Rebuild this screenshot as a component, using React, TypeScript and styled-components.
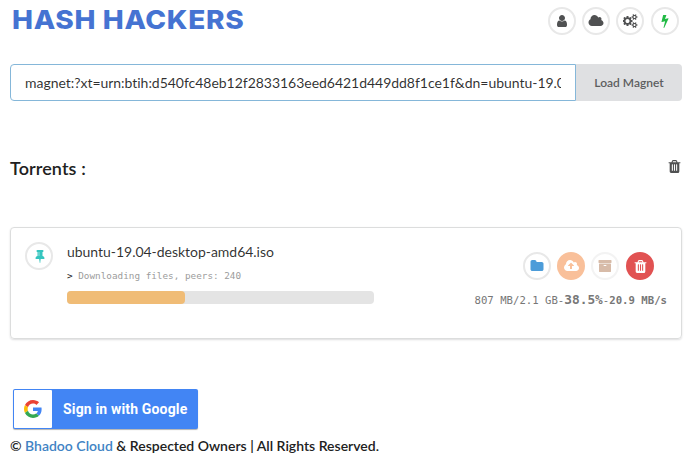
import React from "react";
import styled, { createGlobalStyle } from "styled-components";

const GlobalStyle = createGlobalStyle`
  * { box-sizing: border-box; }
  body {
    margin: 0;
    background: #fff;
    color: rgba(0, 0, 0, 0.87);
    font-family: Lato, "Liberation Sans", sans-serif;
    font-size: 14px;
    font-variant-ligatures: none;
    overflow: hidden;
  }
`;

const glyphs = {
  user: { w: 1792, d: "M1536 1399q0 109-62.5 187t-150.5 78h-854q-88 0-150.5-78t-62.5-187q0-85 8.5-160.5t31.5-152 58.5-131 94-89 134.5-34.5q131 128 313 128t313-128q76 0 134.5 34.5t94 89 58.5 131 31.5 152 8.5 160.5zm-256-887q0 159-112.5 271.5t-271.5 112.5-271.5-112.5-112.5-271.5 112.5-271.5 271.5-112.5 271.5 112.5 112.5 271.5z" },
  cloud: { w: 2048, d: "M1984 1152q0 159-112.5 271.5t-271.5 112.5h-1088q-185 0-316.5-131.5t-131.5-316.5q0-132 71-241.5t187-163.5q-2-28-2-43 0-212 150-362t362-150q158 0 286.5 88t187.5 230q70-62 166-62 106 0 181 75t75 181q0 75-41 138 129 30 213 134.5t84 239.5z" },
  cogs: { w: 1920, d: "M832 896q0-106-75-181t-181-75-181 75-75 181 75 181 181 75 181-75 75-181zm768 512q0-52-38-90t-90-38-90 38-38 90q0 53 37.5 90.5t90.5 37.5 90.5-37.5 37.5-90.5zm0-1024q0-52-38-90t-90-38-90 38-38 90q0 53 37.5 90.5t90.5 37.5 90.5-37.5 37.5-90.5zm-384 421v185q0 10-7 19.5t-16 10.5l-155 24q-11 35-32 76 34 48 90 115 7 11 7 20 0 12-7 19-23 30-82.5 89.5t-78.5 59.5q-11 0-21-7l-115-90q-37 19-77 31-11 108-23 155-7 24-30 24h-186q-11 0-20-7.5t-10-17.5l-23-153q-34-10-75-31l-118 89q-7 7-20 7-11 0-21-8-144-133-144-160 0-9 7-19 10-14 41-53t47-61q-23-44-35-82l-152-24q-10-1-17-9.5t-7-19.5v-185q0-10 7-19.5t16-10.5l155-24q11-35 32-76-34-48-90-115-7-11-7-20 0-12 7-20 22-30 82-89t79-59q11 0 21 7l115 90q34-18 77-32 11-108 23-154 7-24 30-24h186q11 0 20 7.5t10 17.5l23 153q34 10 75 31l118-89q8-7 20-7 11 0 21 8 144 133 144 160 0 8-7 19-12 16-42 54t-45 60q23 48 34 82l152 23q10 2 17 10.5t7 19.5zm640 533v140q0 16-149 31-12 27-30 52 51 113 51 138 0 4-4 7-122 71-124 71-8 0-46-47t-52-68q-20 2-30 2t-30-2q-14 21-52 68t-46 47q-2 0-124-71-4-3-4-7 0-25 51-138-18-25-30-52-149-15-149-31v-140q0-16 149-31 13-29 30-52-51-113-51-138 0-4 4-7 4-2 35-20t59-34 30-16q8 0 46 46.5t52 67.5q20-2 30-2t30 2q51-71 92-112l6-2q4 0 124 70 4 3 4 7 0 25-51 138 17 23 30 52 149 15 149 31zm0-1024v140q0 16-149 31-12 27-30 52 51 113 51 138 0 4-4 7-122 71-124 71-8 0-46-47t-52-68q-20 2-30 2t-30-2q-14 21-52 68t-46 47q-2 0-124-71-4-3-4-7 0-25 51-138-18-25-30-52-149-15-149-31v-140q0-16 149-31 13-29 30-52-51-113-51-138 0-4 4-7 4-2 35-20t59-34 30-16q8 0 46 46.5t52 67.5q20-2 30-2t30 2q51-71 92-112l6-2q4 0 124 70 4 3 4 7 0 25-51 138 17 23 30 52 149 15 149 31z" },
  bolt: { w: 1792, d: "M1333 566q18 20 7 44l-540 1157q-13 25-42 25-4 0-14-2-17-5-25.5-19t-4.5-30l197-808-406 101q-4 1-12 1-18 0-31-11-18-15-13-39l201-825q4-14 16-23t28-9h328q19 0 32 12.5t13 29.5q0 8-5 18l-171 463 396-98q8-2 12-2 19 0 34 15z" },
  trash: { w: 1792, d: "M704 1376v-704q0-14-9-23t-23-9h-64q-14 0-23 9t-9 23v704q0 14 9 23t23 9h64q14 0 23-9t9-23zm256 0v-704q0-14-9-23t-23-9h-64q-14 0-23 9t-9 23v704q0 14 9 23t23 9h64q14 0 23-9t9-23zm256 0v-704q0-14-9-23t-23-9h-64q-14 0-23 9t-9 23v704q0 14 9 23t23 9h64q14 0 23-9t9-23zm-544-992h448l-48-117q-7-9-17-11h-317q-10 2-17 11zm928 32v64q0 14-9 23t-23 9h-96v948q0 83-47 143.5t-113 60.5h-832q-66 0-113-58.5t-47-141.5v-952h-96q-14 0-23-9t-9-23v-64q0-14 9-23t23-9h309l70-167q15-37 54-63t79-26h320q40 0 79 26t54 63l70 167h309q14 0 23 9t9 23z" },
  pin: { w: 1664, d: "M800 864v-448q0-14-9-23t-23-9-23 9-9 23v448q0 14 9 23t23 9 23-9 9-23zm672 352q0 26-19 45t-45 19h-429l-51 483q-2 12-10.5 20.5t-20.5 8.5h-1q-27 0-32-27l-76-485h-404q-26 0-45-19t-19-45q0-123 78.5-221.5t177.5-98.5v-512q-52 0-90-38t-38-90 38-90 90-38h640q52 0 90 38t38 90-38 90-90 38v512q99 0 177.5 98.5t78.5 221.5z" },
  folder: { w: 1792, d: "M1728 608v704q0 92-66 158t-158 66h-1216q-92 0-158-66t-66-158v-960q0-92 66-158t158-66h320q92 0 158 66t66 158v32h672q92 0 158 66t66 158z" },
  upload: { w: 1920, d: "M1280 864q0-14-9-23l-352-352q-9-9-23-9t-23 9l-351 351q-10 12-10 24 0 14 9 23t23 9h224v352q0 13 9.5 22.5t22.5 9.5h192q13 0 22.5-9.5t9.5-22.5v-352h224q13 0 22.5-9.5t9.5-22.5zm640 288q0 159-112.5 271.5t-271.5 112.5h-1088q-185 0-316.5-131.5t-131.5-316.5q0-130 70-240t188-165q-2-30-2-43 0-212 150-362t362-150q156 0 285.5 87t188.5 231q71-62 166-62 106 0 181 75t75 181q0 76-41 138 130 31 213.5 135.5t83.5 238.5z" },
  archive: { w: 1792, d: "M1088 832q0-26-19-45t-45-19h-256q-26 0-45 19t-19 45 19 45 45 19h256q26 0 45-19t19-45zm576-192v960q0 26-19 45t-45 19h-1408q-26 0-45-19t-19-45v-960q0-26 19-45t45-19h1408q26 0 45 19t19 45zm64-448v256q0 26-19 45t-45 19h-1536q-26 0-45-19t-19-45v-256q0-26 19-45t45-19h1536q26 0 45 19t19 45z" },
};

const Icon = ({ name, size = 14 }: { name: keyof typeof glyphs; size?: number }) => (
  <svg
    width={(glyphs[name].w / 1792) * size}
    height={size}
    viewBox={`0 0 ${glyphs[name].w} 1792`}
    fill="currentColor"
    aria-hidden="true"
  >
    <path d={glyphs[name].d} />
  </svg>
);

const Page = styled.div`
  width: 693px;
  height: 468px;
  padding: 0 11px 0 10px;
`;

const Header = styled.header`
  display: flex;
  justify-content: space-between;
  height: 64px;
  padding: 7px 3px 0 1px;
`;

const Logo = styled.h1`
  margin: 1px 0 0 1px;
  height: 24px;
  font: 800 26px/24px Inter, sans-serif;
  letter-spacing: 0.6px;
  color: #4573d2;
  white-space: nowrap;
  transform: scaleX(1.078);
  transform-origin: left center;
`;

const HeaderActions = styled.nav`
  display: flex;
  gap: 6px;

  & > :last-child { margin-left: 1px; }
`;

const CircleButton = styled.button<{ $color?: string; $fill?: string; $faded?: boolean }>`
  display: flex;
  flex: none;
  align-items: center;
  justify-content: center;
  width: 28px;
  height: 28px;
  padding: 0;
  border: ${(p) => (p.$fill ? "0" : "2px solid #e8e8e8")};
  border-radius: 50%;
  background: ${(p) => p.$fill ?? "#fff"};
  color: ${(p) => p.$color ?? "#505152"};
  opacity: ${(p) => (p.$faded ? 0.5 : 1)};
`;

const MagnetForm = styled.form`
  display: flex;
  width: 672px;
  height: 37px;
`;

const MagnetInput = styled.input`
  width: 566px;
  height: 37px;
  padding: 0 14px;
  border: 1px solid #85b7d9;
  border-radius: 4px 0 0 4px;
  outline: 0;
  font: 400 14px Lato, sans-serif;
  font-variant-ligatures: none;
  letter-spacing: -0.03px;
  color: rgba(0, 0, 0, 0.82);
`;

const LoadButton = styled.button`
  flex: 1;
  padding: 0;
  border: 0;
  border-radius: 0 4px 4px 0;
  background: #dfe0e2;
  color: #5d5e5f;
  font: 600 12px Lato, sans-serif;
`;

const SectionHead = styled.div`
  display: flex;
  align-items: flex-start;
  justify-content: space-between;
  height: 24px;
  margin-top: 55px;
  color: #505152;

  & > svg { margin-top: 3px; }
`;

const SectionTitle = styled.h2`
  margin: 0;
  font-size: 18px;
  line-height: 24px;
  font-weight: 600;
  letter-spacing: 0.1px;
  color: #212121;
`;

const Card = styled.article`
  display: flex;
  width: 672px;
  height: 112px;
  margin-top: 47px;
  padding: 14px;
  border: 1px solid #dcdddd;
  border-radius: 4px;
  box-shadow: 0 1px 2px rgba(34, 36, 38, 0.15);
`;

const Details = styled.div`
  width: 307px;
  margin-left: 14px;
`;

const FileName = styled.div`
  height: 20px;
  line-height: 20px;
  font-size: 14px;
  letter-spacing: -0.03px;
  color: rgba(0, 0, 0, 0.82);
`;

const Status = styled.div`
  height: 14px;
  margin-top: 7px;
  font: 400 9.33px/14px "DejaVu Sans Mono", monospace;
  color: #9c9c9c;
  white-space: pre;
`;

const Prompt = styled.span`
  color: #222;
`;

const Track = styled.div`
  height: 13px;
  margin-top: 8px;
  border-radius: 4px;
  background: #e4e4e4;
`;

const Progress = styled.div`
  width: 38.5%;
  height: 100%;
  border-radius: 4px;
  background: #f0bc76;
`;

const Side = styled.div`
  display: flex;
  flex: 1;
  flex-direction: column;
  align-items: flex-end;
  padding-top: 10px;
`;

const CardActions = styled.div`
  display: flex;
  gap: 6px;
  padding-right: 13px;

  & > :last-child { margin-left: 1px; }
`;

const Stats = styled.div`
  display: flex;
  align-items: baseline;
  margin-top: 10px;
  font: 400 10.67px/20px "DejaVu Sans Mono", monospace;
  color: #777;
  white-space: pre;
`;

const Percent = styled.strong`
  font-size: 12.8px;
`;

const GoogleButton = styled.button`
  display: flex;
  align-items: center;
  width: 185px;
  height: 40px;
  margin: 50px 0 0 3px;
  padding: 1px;
  border: 0;
  border-radius: 2px;
  background: #4285f4;
  box-shadow: 0 1px 1px rgba(0, 0, 0, 0.3);
  color: #fff;
  font: 700 14px Roboto, sans-serif;
  letter-spacing: 0.16px;
`;

const GoogleMark = styled.span`
  display: flex;
  align-items: center;
  justify-content: center;
  width: 38px;
  height: 38px;
  margin-right: 11px;
  border-radius: 1px;
  background: #fff;
`;

const Footer = styled.footer`
  margin-top: 7px;
  font-size: 14px;
  line-height: 20px;
  font-weight: 600;
  color: #212121;
`;

const FooterLink = styled.a`
  color: #4183c4;
`;

const magnet =
  "magnet:?xt=urn:btih:d540fc48eb12f2833163eed6421d449dd8f1ce1f&dn=ubuntu-19.04-desktop-amd64.iso";

export default function App() {
  return (
    <>
      <GlobalStyle />
      <Page>
        <Header>
          <Logo>HASH HACKERS</Logo>
          <HeaderActions>
            <CircleButton aria-label="Account"><Icon name="user" /></CircleButton>
            <CircleButton aria-label="Cloud"><Icon name="cloud" /></CircleButton>
            <CircleButton aria-label="Settings"><Icon name="cogs" /></CircleButton>
            <CircleButton aria-label="Power" $color="#21ba45"><Icon name="bolt" /></CircleButton>
          </HeaderActions>
        </Header>

        <MagnetForm>
          <MagnetInput defaultValue={magnet} aria-label="Magnet link" />
          <LoadButton type="button">Load Magnet</LoadButton>
        </MagnetForm>

        <SectionHead>
          <SectionTitle>Torrents :</SectionTitle>
          <Icon name="trash" size={15} />
        </SectionHead>

        <Card>
          <CircleButton aria-label="Pin" $color="#35c5bf"><Icon name="pin" /></CircleButton>
          <Details>
            <FileName>ubuntu-19.04-desktop-amd64.iso</FileName>
            <Status><Prompt>&gt;</Prompt> Downloading files, peers: 240</Status>
            <Track><Progress /></Track>
          </Details>
          <Side>
            <CardActions>
              <CircleButton aria-label="Open" $color="#4c9cd9"><Icon name="folder" /></CircleButton>
              <CircleButton aria-label="Upload" $color="#fff" $fill="#f9c09a"><Icon name="upload" /></CircleButton>
              <CircleButton aria-label="Archive" $color="#b07a54" $faded><Icon name="archive" /></CircleButton>
              <CircleButton aria-label="Delete" $color="#fff" $fill="#e15252"><Icon name="trash" size={15} /></CircleButton>
            </CardActions>
            <Stats>807 MB/2.1 GB-<Percent>38.5%</Percent>-<b>20.9 MB/s</b></Stats>
          </Side>
        </Card>

        <GoogleButton>
          <GoogleMark>
            <svg width="18" height="18" viewBox="0 0 48 48" aria-hidden="true">
              <path fill="#EA4335" d="M24 9.5c3.54 0 6.71 1.22 9.21 3.6l6.85-6.85C35.9 2.38 30.47 0 24 0 14.62 0 6.51 5.38 2.56 13.22l7.98 6.19C12.43 13.72 17.74 9.5 24 9.5z" />
              <path fill="#4285F4" d="M46.98 24.55c0-1.57-.15-3.09-.38-4.55H24v9.02h12.94c-.58 2.96-2.26 5.48-4.78 7.18l7.73 6c4.51-4.18 7.09-10.36 7.09-17.65z" />
              <path fill="#FBBC05" d="M10.53 28.59c-.48-1.45-.76-2.99-.76-4.59s.27-3.14.76-4.59l-7.98-6.19C.92 16.46 0 20.12 0 24c0 3.88.92 7.54 2.56 10.78l7.97-6.19z" />
              <path fill="#34A853" d="M24 48c6.48 0 11.93-2.13 15.89-5.81l-7.73-6c-2.15 1.45-4.92 2.3-8.16 2.3-6.26 0-11.57-4.22-13.47-9.91l-7.98 6.19C6.51 42.62 14.62 48 24 48z" />
            </svg>
          </GoogleMark>
          Sign in with Google
        </GoogleButton>
        <Footer>© <FooterLink>Bhadoo Cloud</FooterLink> &amp; Respected Owners | All Rights Reserved.</Footer>
      </Page>
    </>
  );
}
